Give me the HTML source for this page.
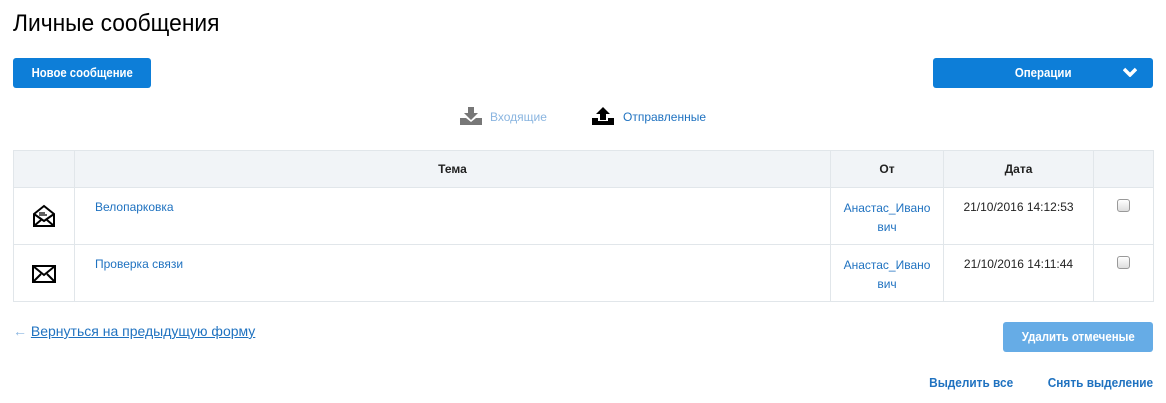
<!DOCTYPE html>
<html><head><meta charset="utf-8"><style>
body{margin:0;width:1166px;height:403px;background:#fff;font-family:"Liberation Sans",sans-serif;font-size:12px;color:#222;position:relative;overflow:hidden}
.a{position:absolute}
.s{display:inline-block;transform:scaleX(.88)}
.btn{background:#0d7ed8;color:#fff;border-radius:3px;font-weight:bold;font-size:13px;text-align:center;line-height:30px}
.l{color:#1f72c0}
table{border-collapse:collapse;position:absolute;left:13px;top:150px;width:1141px;table-layout:fixed}
td,th{border:1px solid #e1e6ea;vertical-align:top;font-size:12px;padding:0;box-sizing:border-box}
th{background:#f1f4f7;height:37px;font-weight:bold;vertical-align:middle;font-size:12px}
tr.r{height:57px}
.cb{width:11px;height:11px;border:1px solid #999;border-radius:3px;background:linear-gradient(#fff,#ddd);display:inline-block;margin-top:11px}
</style></head><body>
<div class="a" style="left:13px;top:10px;font-size:24px;color:#000;transform:scaleX(.95);transform-origin:left">Личные сообщения</div>
<div class="a btn" style="left:13px;top:58px;width:138px;height:30px"><span class="s" style="transform:scaleX(.87)">Новое сообщение</span></div>
<div class="a btn" style="left:933px;top:58px;width:220px;height:30px"><span class="s">Операции</span><svg style="position:absolute;right:16px;top:9px" width="14" height="10" viewBox="0 0 14 10"><path d="M1 2l6 6 6-6" stroke="#fff" stroke-width="3.5" fill="none"/></svg></div>
<svg class="a" style="left:460px;top:107px" width="22" height="18" viewBox="0 0 22 18"><path d="M8 0h6v6h4l-7 7-7-7h4z" fill="#777"/><path d="M0 11h6l5 4 5-4h6v7H0z" fill="#777"/></svg>
<div class="a" style="left:490px;top:110px;color:#8ab5e0">Входящие</div>
<svg class="a" style="left:592px;top:107px" width="22" height="18" viewBox="0 0 22 18"><path d="M11 0l7 7h-4v6H8V7H4z" fill="#000"/><path d="M0 11h6v3h10v-3h6v7H0z" fill="#000"/></svg>
<div class="a l" style="left:623px;top:110px">Отправленные</div>
<table>
<colgroup><col style="width:61px"><col><col style="width:113px"><col style="width:150px"><col style="width:60px"></colgroup>
<tr><th></th><th>Тема</th><th>От</th><th>Дата</th><th></th></tr>
<tr class="r"><td style="text-align:center"><svg style="margin-top:16px" width="24" height="24" viewBox="0 0 24 24"><path d="M2 10L12 2l10 8v12H2z M2 10l10 7 10-7 M2 22l7-6 M22 22l-7-6" stroke="#000" stroke-width="2" fill="#fff"/><path d="M7 9h6M7 11h8" stroke="#000" stroke-width="1.3"/></svg></td><td style="padding:12px 20px 0" class="l">Велопарковка</td><td style="text-align:center;padding-top:11px;line-height:19px" class="l">Анастас_Ивано<br>вич</td><td style="text-align:center;padding-top:12px">21/10/2016 14:12:53</td><td style="text-align:center"><span class="cb"></span></td></tr>
<tr class="r"><td style="text-align:center"><svg style="margin-top:20px" width="24" height="18" viewBox="0 0 24 18"><path d="M1 1h22v16H1z M1 1l11 9 11-9 M1 17l8-8 M23 17l-8-8" stroke="#000" stroke-width="2" fill="#fff"/></svg></td><td style="padding:12px 20px 0" class="l">Проверка связи</td><td style="text-align:center;padding-top:11px;line-height:19px" class="l">Анастас_Ивано<br>вич</td><td style="text-align:center;padding-top:12px">21/10/2016 14:11:44</td><td style="text-align:center"><span class="cb"></span></td></tr>
</table>
<div class="a" style="left:13px;top:323px;font-size:14px"><span style="color:#8ab5e0">←</span> <span class="l" style="text-decoration:underline">Вернуться на предыдущую форму</span></div>
<div class="a btn" style="left:1003px;top:322px;width:150px;height:30px;background:#66ace6"><span class="s">Удалить отмеченые</span></div>
<div class="a l" style="right:13px;top:375px;font-weight:bold;font-size:13px;white-space:nowrap;transform:scaleX(.91);transform-origin:right">Выделить все<span style="display:inline-block;width:38px"></span>Снять выделение</div>
</body></html>
